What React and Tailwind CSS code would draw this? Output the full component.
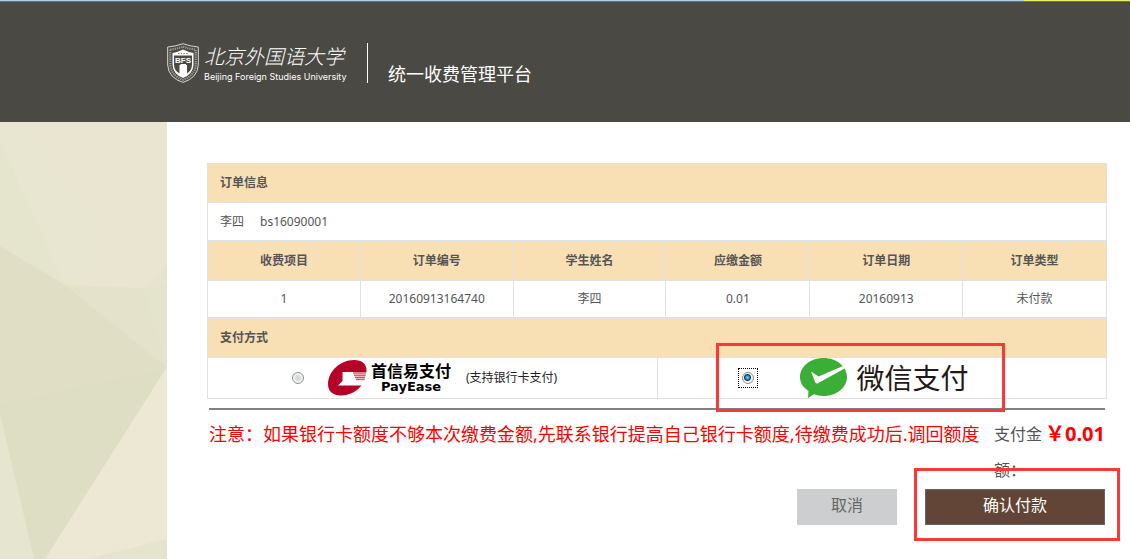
import React, { useState } from 'react';

const colunas = [
  { titulo: '收费项目', valor: '1', largura: 'w-[17%]' },
  { titulo: '订单编号', valor: '20160913164740', largura: 'w-[17%]' },
  { titulo: '学生姓名', valor: '李四', largura: 'w-[17%]' },
  { titulo: '应缴金额', valor: '0.01', largura: 'w-[16%]' },
  { titulo: '订单日期', valor: '20160913', largura: 'w-[17%]' },
  { titulo: '订单类型', valor: '未付款', largura: 'w-[16%]' },
];

function Escudo() {
  return (
    <svg className="w-8 h-10 flex-none" viewBox="0 0 32 40" aria-hidden="true">
      <path d="M.7 4Q8 3.500 16 .7Q24 3.500 31.300 4V22Q30.500 35 16 39.400Q1.500 35 .7 22Z" fill="#4a4943" stroke="#d8d8d4" strokeWidth="1" />
      <path d="M3.300 6.600Q10 5.800 16 3.600Q22 5.800 28.700 6.600V22Q27.500 33 16 36.800Q4.500 33 3.300 22Z" fill="none" stroke="#9b9a95" strokeWidth="2.200" strokeDasharray="1.300 .9" />
      <path d="M5.500 10Q11 9 16 6.500Q21 9 26.500 10V22Q26 31 16 35Q6 31 5.500 22Z" fill="#fff" />
      <path d="M11 10.600H21" stroke="#77766f" strokeWidth="1" strokeDasharray="1.500 1.200" />
      <path d="M7 12.600H25V22Q24.500 28 20 30.500V22H12.500V30.500Q7.500 28 7 22Z" fill="#4a4943" />
      <path d="M13.500 21H19V28Q18.500 31.500 15 32.500Q17 30 13.500 28.500Z" fill="#fff" />
      <text x="16" y="20" textAnchor="middle" fontFamily="Liberation Sans, sans-serif" fontSize="8" fontWeight="700" fill="#fff">BFS</text>
    </svg>
  );
}

function FundoLateral() {
  return (
    <svg className="block w-full h-[437px]" viewBox="0 0 167 437" preserveAspectRatio="none" aria-hidden="true">
      <rect width="167" height="437" fill="#e9e5cf" />
      <path d="M23 0H167V142L143 166L65 163Z" fill="#eae5d0" />
      <path d="M0 0H23L65 57L100 97L85 163H65L0 19Z" fill="#e8e6d0" />
      <path d="M0 19L65 163L0 124Z" fill="#e5e5cd" />
      <path d="M143 166L167 142V161Z" fill="#e6e4ce" />
      <path d="M143 166L167 161V245Z" fill="#e4e3cb" />
      <path d="M65 163L143 166L167 245Z" fill="#e4e2ca" />
      <path d="M0 124L65 163L167 245L0 281Z" fill="#e0dfc6" />
      <path d="M0 281L167 245L45 437H34L0 293Z" fill="#dedec4" />
      <path d="M0 293L34 437H0Z" fill="#e6e5cf" />
      <path d="M167 245V417L88 437H45Z" fill="#ede8d4" />
      <path d="M167 417V437H88Z" fill="#e5e4cd" />
    </svg>
  );
}

function LogoPayEase() {
  return (
    <span className="flex items-center gap-1">
      <svg className="w-[39px] h-9" viewBox="0 0 39 36" aria-hidden="true">
        <path d="M26 0C34 0 38.500 3.500 38.500 11C38.500 24 27 35.500 13 35.500C5 35.500 0 31.500 0 24C0 11 12.500 0 26 0Z" fill="#b70028" />
        <path d="M14.500 12H39V21L34 25.500H10L14.500 21Z" fill="#fff" />
        <path d="M25 12H38.500L36.500 20H28Z" fill="#efb9c2" />
        <path d="M25 13H38M26 15.300H37.500M27 17.500H37M28 19.700H36.500" stroke="#cf4a64" strokeWidth="1" />
      </svg>
      <span className="flex flex-col items-center text-black">
        <span className="text-base leading-[18px] font-bold">首信易支付</span>
        <span className="font-['DejaVu_Sans'] text-[13px] leading-[14px] font-bold">PayEase</span>
      </span>
    </span>
  );
}

function LogoWeChat() {
  return (
    <span className="flex items-center gap-2.5">
      <svg className="w-[47px] h-10" viewBox="0 0 47 40" aria-hidden="true">
        <path d="M23.500 0C36.500 0 47 8.500 47 19C47 29.500 36.500 38 23.500 38C20 38 17 37.500 14 36.300L8 40L8.500 33C3 29.500 0 24.500 0 19C0 8.500 10.500 0 23.500 0Z" fill="#3aae36" />
        <path d="M11 13.500L18.500 18.500L43 8L44.500 10.500L17.500 25.500Q15.800 26 15 24Z" fill="#fff" />
      </svg>
      <span className="text-[28px] leading-9 text-[#231815]">微信支付</span>
    </span>
  );
}

function Opcao({ id, valor, pagamento, setPagamento }) {
  return (
    <span className="flex-none p-1 has-checked:p-[3px] has-checked:border has-checked:border-dotted has-checked:border-black">
      <input
        type="radio"
        id={id}
        name="pagamento"
        value={valor}
        checked={pagamento === valor}
        onChange={() => setPagamento(valor)}
        className="block appearance-none w-3 h-3 rounded-full border border-[#8e8f8f] bg-[radial-gradient(circle,#cfd3d6_0,#e2e4e6_3px,#f8f8f8_5px)] checked:bg-[radial-gradient(circle_at_45%_45%,#7fdcff_0,#1e83c4_2px,#12384f_3px,#f4f4f4_4px)]"
      />
    </span>
  );
}

function App() {
  const [pagamento, setPagamento] = useState('wechat');

  return (
    <div className="min-h-screen flex flex-col bg-white text-[#555] font-['Noto_Sans','Noto_Sans_CJK_SC',sans-serif]">
      <div className="flex h-0.5 border-b border-[#66727c]">
        <div className="flex-1 bg-[#a9cdec]" />
        <div className="w-[106px] bg-[#f4ec62]" />
      </div>

      <header className="flex h-[120px] bg-[#4a4943] pl-[167px] pt-[41px] text-white">
        <div className="flex items-start gap-[5px]">
          <Escudo />
          <div className="w-36 whitespace-nowrap">
            <p className="text-xl leading-[28px] font-light italic">北京外国语大学</p>
            <p className="font-['Inter'] text-[9px] leading-3">Beijing Foreign Studies University</p>
          </div>
        </div>
        <div className="ml-[19px] h-10 w-px bg-white" />
        <h1 className="ml-5 mt-[18px] text-lg leading-[27px]">统一收费管理平台</h1>
      </header>

      <div className="flex flex-1">
        <aside className="w-[167px] flex-none bg-[#e7e5cf]">
          <FundoLateral />
        </aside>

        <main className="flex-1 pl-10 pr-[23px] pt-[41px] text-xs">
          <table className="w-full border-collapse">
            <tbody>
              <tr className="h-[39px] bg-[#f8dfb4]">
                <th className="border border-[#e2e2e2] px-3 text-left font-bold">订单信息</th>
              </tr>
              <tr className="h-[38px]">
                <td className="border border-[#e2e2e2] px-3">
                  <span className="mr-4">李四</span>
                  <span>bs16090001</span>
                </td>
              </tr>
            </tbody>
          </table>

          <table className="w-full table-fixed border-collapse text-center">
            <thead>
              <tr className="h-[39px] bg-[#f8dfb4]">
                {colunas.map((coluna) => (
                  <th key={coluna.titulo} className={`border border-[#e2e2e2] font-bold ${coluna.largura}`}>
                    {coluna.titulo}
                  </th>
                ))}
              </tr>
            </thead>
            <tbody>
              <tr className="h-[37px]">
                {colunas.map((coluna) => (
                  <td key={coluna.titulo} className="border border-[#e2e2e2]">{coluna.valor}</td>
                ))}
              </tr>
            </tbody>
          </table>

          <table className="w-full table-fixed border-collapse">
            <tbody>
              <tr className="h-[39px] bg-[#f8dfb4]">
                <th colSpan={2} className="border border-[#e2e2e2] px-3 text-left font-bold">支付方式</th>
              </tr>
              <tr className="h-[41px]">
                <td className="border border-[#e2e2e2] pl-20">
                  <div className="flex items-center">
                    <Opcao id="payease" valor="payease" pagamento={pagamento} setPagamento={setPagamento} />
                    <label htmlFor="payease" className="ml-5 flex items-center gap-[15px] text-[#222]">
                      <LogoPayEase />
                      <span>(支持银行卡支付)</span>
                    </label>
                  </div>
                </td>
                <td className="relative border border-[#e2e2e2] pl-20">
                  <div className="flex items-center">
                    <Opcao id="wechat" valor="wechat" pagamento={pagamento} setPagamento={setPagamento} />
                    <label htmlFor="wechat" className="ml-[42px]">
                      <LogoWeChat />
                    </label>
                  </div>
                  <div className="pointer-events-none absolute -top-[15px] left-[58px] h-[69px] w-[289px] border-3 border-[#fb3838]" />
                </td>
              </tr>
            </tbody>
          </table>

          <div className="mx-0.5 mt-[9px]">
            <hr className="border-t-2 border-[#808080]" />
            <div className="mt-1.5 flex items-start justify-between">
              <p className="flex-1 text-lg leading-9 text-[#f00]">
                注意：如果银行卡额度不够本次缴费金额,先联系银行提高自己银行卡额度,待缴费成功后.调回额度
              </p>
              <p className="w-[51px] flex-none text-base leading-9">支付金额：</p>
              <strong className="flex-none text-xl leading-9 text-[#f00]">￥0.01</strong>
            </div>
            <div className="mt-px flex justify-end gap-7 text-base">
              <button type="button" className="h-9 w-[100px] bg-[#cdcecf] pb-1 text-[#666]">取消</button>
              <div className="relative">
                <button type="submit" className="h-9 w-[180px] border border-[#666] bg-[#624536] pb-1 text-white">
                  确认付款
                </button>
                <div className="pointer-events-none absolute -left-[11px] -right-[15px] -top-[21px] -bottom-4 border-3 border-[#fb3838]" />
              </div>
            </div>
          </div>
        </main>
      </div>
    </div>
  );
}

export default App;
